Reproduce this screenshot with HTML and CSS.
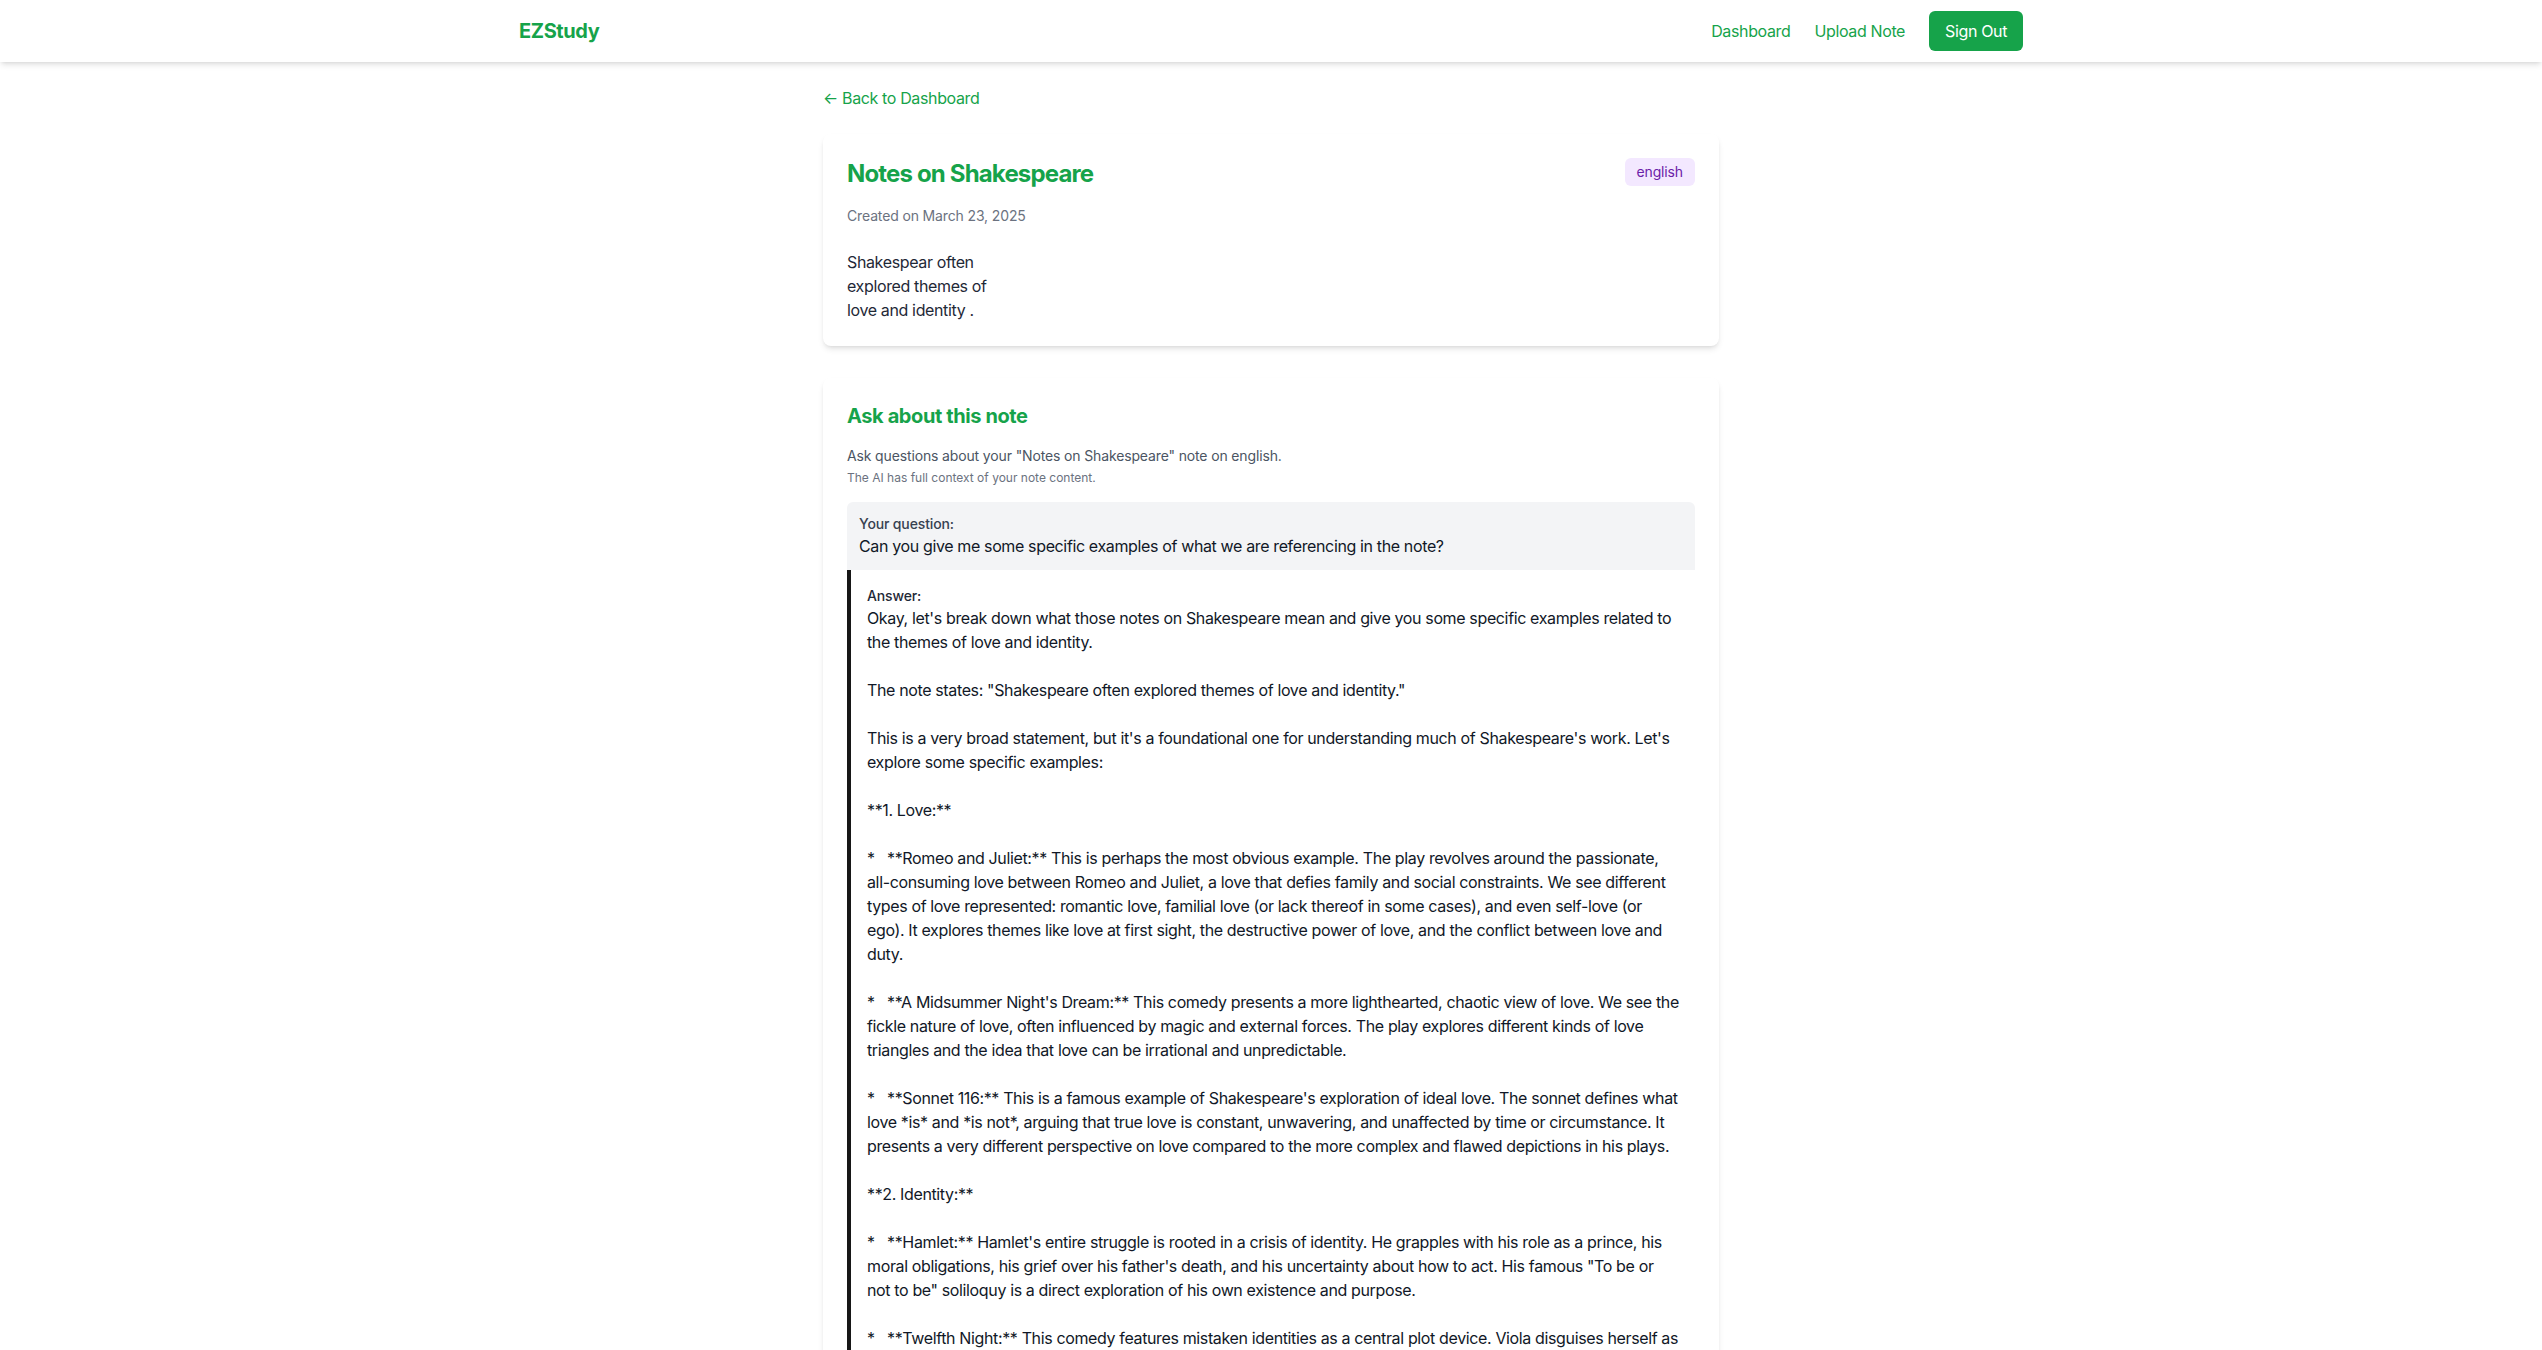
FILE: index.html
```html
<!DOCTYPE html>
<html lang="en">
<head>
<meta charset="utf-8">
<title>EZStudy - Notes on Shakespeare</title>
<link rel="stylesheet" href="styles.css">
</head>
<body>
<nav class="nav">
  <div class="nav-inner">
    <a class="logo" href="#">EZStudy</a>
    <div class="nav-links">
      <a class="nav-link" href="#">Dashboard</a>
      <a class="nav-link" href="#">Upload Note</a>
      <button class="btn-signout">Sign Out</button>
    </div>
  </div>
</nav>
<main class="main">
  <a class="back-link" href="#">← Back to Dashboard</a>

  <section class="card note-card">
    <div class="note-header">
      <h1 class="note-title">Notes on Shakespeare</h1>
      <span class="badge">english</span>
    </div>
    <p class="note-date">Created on March 23, 2025</p>
    <div class="note-content">Shakespear often
explored themes of
love and identity .</div>
  </section>

  <section class="card ask-card">
    <h2 class="ask-title">Ask about this note</h2>
    <p class="ask-desc">Ask questions about your "Notes on Shakespeare" note on english.</p>
    <p class="ask-hint">The AI has full context of your note content.</p>

    <div class="question">
      <div class="question-label">Your question:</div>
      <div class="question-text">Can you give me some specific examples of what we are referencing in the note?</div>
    </div>
    <div class="answer">
      <div class="answer-label">Answer:</div>
      <div class="answer-text">Okay, let's break down what those notes on Shakespeare mean and give you some specific examples related to the themes of love and identity.

The note states: "Shakespeare often explored themes of love and identity."

This is a very broad statement, but it's a foundational one for understanding much of Shakespeare's work. Let's explore some specific examples:

**1. Love:**

*   **Romeo and Juliet:** This is perhaps the most obvious example. The play revolves around the passionate, all-consuming love between Romeo and Juliet, a love that defies family and social constraints. We see different types of love represented: romantic love, familial love (or lack thereof in some cases), and even self-love (or ego). It explores themes like love at first sight, the destructive power of love, and the conflict between love and duty.

*   **A Midsummer Night's Dream:** This comedy presents a more lighthearted, chaotic view of love. We see the fickle nature of love, often influenced by magic and external forces. The play explores different kinds of love triangles and the idea that love can be irrational and unpredictable.

*   **Sonnet 116:** This is a famous example of Shakespeare's exploration of ideal love. The sonnet defines what love *is* and *is not*, arguing that true love is constant, unwavering, and unaffected by time or circumstance. It presents a very different perspective on love compared to the more complex and flawed depictions in his plays.

**2. Identity:**

*   **Hamlet:** Hamlet's entire struggle is rooted in a crisis of identity. He grapples with his role as a prince, his moral obligations, his grief over his father's death, and his uncertainty about how to act. His famous "To be or not to be" soliloquy is a direct exploration of his own existence and purpose.

*   **Twelfth Night:** This comedy features mistaken identities as a central plot device. Viola disguises herself as a man, Cesario, which leads to a tangle of romantic confusion and raises questions about gender and the fluidity of identity.</div>
    </div>
  </section>
</main>
</body>
</html>
```

FILE: styles.css
```css
* {
  box-sizing: border-box;
}

html, body {
  margin: 0;
  padding: 0;
  background: #ffffff;
}

body {
  font-family: Inter, "Liberation Sans", sans-serif;
  color: #111827;
  font-size: 16px;
  line-height: 24px;
  letter-spacing: -0.0228em;
}

a {
  text-decoration: none;
}

h1, h2, p {
  margin: 0;
}

.nav {
  background: #ffffff;
  box-shadow: 0 4px 6px -1px rgba(0, 0, 0, 0.1), 0 2px 4px -2px rgba(0, 0, 0, 0.1);
}

.nav-inner {
  max-width: 1536px;
  margin: 0 auto;
  padding: 0 16px;
  height: 62px;
  display: flex;
  align-items: center;
  justify-content: space-between;
}

.logo {
  color: #16a34a;
  font-weight: 700;
  font-size: 20px;
  line-height: 28px;
  letter-spacing: -0.02em;
}

.nav-links {
  display: flex;
  align-items: center;
  gap: 24px;
}

.nav-link {
  color: #16a34a;
  font-size: 16px;
  line-height: 24px;
}

.btn-signout {
  font-family: inherit;
  letter-spacing: inherit;
  font-size: 16px;
  line-height: 24px;
  color: #ffffff;
  background: #16a34a;
  border: none;
  border-radius: 6px;
  padding: 8px 16px;
  cursor: pointer;
}

.main {
  max-width: 896px;
  margin: 0 auto;
  padding: 24px 0;
}

.back-link {
  display: inline-block;
  color: #16a34a;
  font-size: 16px;
  line-height: 24px;
  margin-bottom: 24px;
}

.card {
  background: #ffffff;
  border-radius: 8px;
  box-shadow: 0 4px 6px -1px rgba(0, 0, 0, 0.1), 0 2px 4px -2px rgba(0, 0, 0, 0.1);
  padding: 24px;
}

.note-card {
  margin-bottom: 32px;
}

.note-header {
  display: flex;
  justify-content: space-between;
  align-items: flex-start;
  margin-bottom: 16px;
}

.note-title {
  color: #16a34a;
  font-size: 24px;
  line-height: 32px;
  font-weight: 700;
  letter-spacing: -0.035em;
}

.badge {
  background: #f3e8ff;
  color: #6b21a8;
  font-size: 14px;
  line-height: 20px;
  letter-spacing: -0.01em;
  padding: 4px 12px;
  border-radius: 6px;
}

.note-date {
  color: #6b7280;
  font-size: 14px;
  line-height: 20px;
  letter-spacing: -0.01em;
  margin-bottom: 24px;
}

.note-content {
  white-space: pre-wrap;
  color: #1f2937;
  font-size: 16px;
  line-height: 24px;
}

.ask-title {
  color: #16a34a;
  font-size: 20px;
  line-height: 28px;
  font-weight: 700;
  letter-spacing: -0.02em;
  margin-bottom: 16px;
}

.ask-desc {
  color: #4b5563;
  font-size: 14px;
  line-height: 20px;
  letter-spacing: -0.01em;
}

.ask-hint {
  color: #6b7280;
  font-size: 12px;
  line-height: 16px;
  letter-spacing: 0;
  margin-top: 4px;
  margin-bottom: 16px;
}

.question {
  background: #f3f4f6;
  border-radius: 6px 6px 0 0;
  padding: 12px;
}

.question-label {
  color: #374151;
  font-size: 14px;
  line-height: 20px;
  font-weight: 500;
  letter-spacing: -0.01em;
}

.question-text {
  color: #111827;
  font-size: 16px;
  line-height: 24px;
}

.answer {
  border-left: 4px solid #171717;
  padding: 16px;
}

.answer-label {
  color: #1f2937;
  font-size: 14px;
  line-height: 20px;
  font-weight: 500;
  letter-spacing: -0.01em;
}

.answer-text {
  white-space: pre-wrap;
  color: #111827;
  font-size: 16px;
  line-height: 24px;
}
```
